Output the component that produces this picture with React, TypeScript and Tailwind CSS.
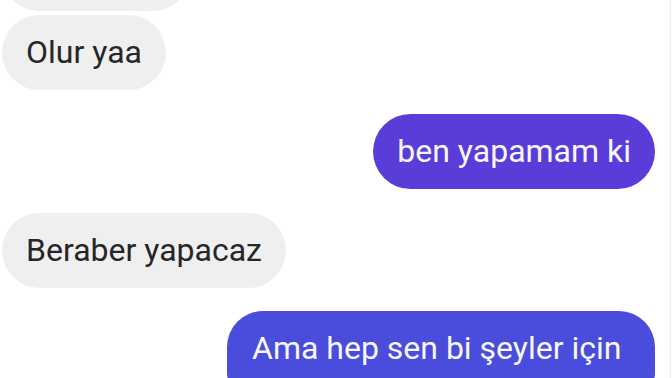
const messages = [
  { id: 1, mine: false, text: 'Olur yaa', gap: 'mt-[4px]' },
  { id: 2, mine: true, text: 'ben yapamam ki', gap: 'mt-[24px]' },
  { id: 3, mine: false, text: 'Beraber yapacaz', gap: 'mt-[24px]' },
  { id: 4, mine: true, text: 'Ama hep sen bi şeyler için', gap: 'mt-[23px]', wide: true }
]

const Bubble = ({ mine, text, wide }: { mine: boolean; text: string; wide?: boolean }) => {
  if (mine) {
    return (
      <div
        className={
          wide
            ? 'w-[428px] rounded-[36px] bg-[#4a4cdb] px-[25px] pt-[18px] pb-[40px] text-[32px] leading-[39px] text-[#f7f7fb]'
            : 'rounded-full bg-[#5a3dd8] px-[24px] py-[18px] text-[32px] leading-[39px] text-[#f7f7fb]'
        }
      >
        {text}
      </div>
    )
  }
  return (
    <div className="rounded-full bg-[#efefef] px-[24px] py-[18px] text-[32px] leading-[39px] text-[#262626]">
      {text}
    </div>
  )
}

const App = () => {
  return (
    <div
      className="h-[378px] w-[672px] overflow-hidden bg-white pr-[1px]"
      style={{ fontFamily: 'Roboto, "Noto Sans", sans-serif' }}
    >
      <div className="flex h-full flex-col border-r border-[#ededed] pl-[2px] pr-[15px]">
        <div className="mt-[-64px] flex justify-start">
          <div className="h-[75px] w-[188px] rounded-full bg-[#efefef]" />
        </div>
        {messages.map((m) => (
          <div key={m.id} className={`flex ${m.mine ? 'justify-end' : 'justify-start'} ${m.gap}`}>
            <Bubble mine={m.mine} text={m.text} wide={m.wide} />
          </div>
        ))}
      </div>
    </div>
  )
}

export default App
